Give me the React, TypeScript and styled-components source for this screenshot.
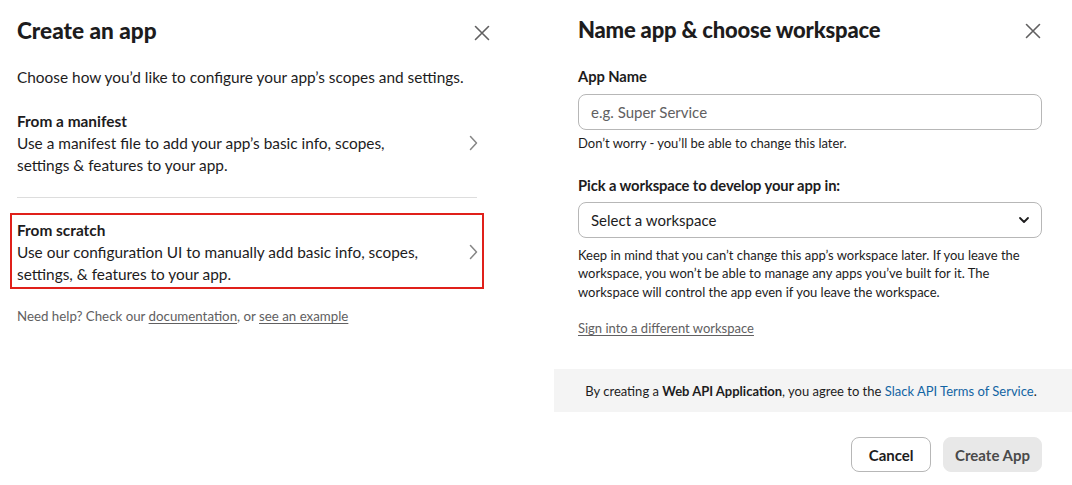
import React from "react";
import styled, { createGlobalStyle } from "styled-components";

const Global = createGlobalStyle`
  html, body { margin: 0; padding: 0; background: #ffffff; }
  body { font-family: Lato, "Noto Sans", sans-serif; color: #1d1c1d; -webkit-font-smoothing: antialiased; }
  * { box-sizing: border-box; }
`;

const Page = styled.div`
  display: flex;
  width: 1072px;
  height: 485px;
  overflow: hidden;
`;

const LeftPanel = styled.section`
  width: 554px;
  flex: none;
  padding: 15px 0 0 17px;
  display: flex;
  flex-direction: column;
`;

const RightPanel = styled.section`
  flex: 1;
  padding-top: 14px;
  display: flex;
  flex-direction: column;
`;

const Header = styled.div<{ $width: number; $xDrop?: number }>`
  width: ${(p) => p.$width}px;
  display: flex;
  align-items: center;
  justify-content: space-between;
  height: 32px;
  & > button { margin-top: ${(p) => p.$xDrop || 0}px; }
`;

const Title = styled.h1<{ $size: number; $spacing: number }>`
  margin: 0;
  font-size: ${(p) => p.$size}px;
  font-weight: 900;
  letter-spacing: ${(p) => p.$spacing}px;
  line-height: 32px;
  color: #1d1c1d;
`;

const CloseBtn = styled.button`
  border: 0;
  background: none;
  padding: 0;
  width: 18px;
  height: 18px;
  display: flex;
  align-items: center;
  justify-content: center;
  color: #616061;
  cursor: pointer;
`;

const Subtitle = styled.p`
  margin: 19px 0 0;
  font-size: 15.4px;
  line-height: 22px;
  color: #1d1c1d;
`;

const Spacer = styled.div<{ $h: number }>`
  height: ${(p) => p.$h}px;
  flex: none;
`;

const Option = styled.div<{ $highlight?: boolean }>`
  width: 474px;
  margin-left: -7px;
  padding: 4px 5px 2px 5px;
  border: 2px solid ${(p) => (p.$highlight ? "#e0201a" : "transparent")};
  display: flex;
  align-items: center;
`;

const OptionText = styled.div`
  flex: 1;
  font-size: 15.4px;
  line-height: 22px;
`;

const OptionTitle = styled.div`
  font-weight: 700;
  color: #1d1c1d;
`;

const OptionDesc = styled.div`
  color: #1d1c1d;
  width: 410px;
`;

const Chevron = styled.div`
  width: 9px;
  height: 20px;
  display: flex;
  align-items: center;
  justify-content: center;
  margin-right: -1px;
  color: #868686;
`;

const Divider = styled.hr`
  width: 460px;
  margin: 0;
  border: 0;
  border-top: 1px solid #dddddd;
`;

const Help = styled.p`
  margin: 18px 0 0;
  font-size: 13.3px;
  line-height: 18px;
  color: #616061;
`;

const HelpLink = styled.a`
  color: #616061;
  text-decoration: underline;
  text-underline-offset: 2px;
`;

const Form = styled.div`
  padding: 0 30px 0 24px;
  display: flex;
  flex-direction: column;
`;

const Label = styled.label<{ $top: number }>`
  margin-top: ${(p) => p.$top}px;
  font-size: 14.75px;
  font-weight: 700;
  letter-spacing: -0.1px;
  line-height: 22px;
  color: #1d1c1d;
`;

const TextInput = styled.input`
  margin-top: 7px;
  height: 36px;
  width: 100%;
  border: 1px solid #b7b7b7;
  border-radius: 8px;
  padding: 0 12px;
  font-family: Lato, "Noto Sans", sans-serif;
  font-size: 15px;
  color: #1d1c1d;
  outline: none;
  &::placeholder { color: #616061; }
`;

const Hint = styled.p<{ $top: number }>`
  margin: ${(p) => p.$top}px 0 0;
  font-size: 13px;
  line-height: 18.5px;
  color: #1d1c1d;
`;

const SelectBox = styled.div`
  margin-top: 6px;
  height: 36px;
  border: 1px solid #b7b7b7;
  border-radius: 8px;
  padding: 0 11px 0 12px;
  display: flex;
  align-items: center;
  justify-content: space-between;
  font-size: 15px;
  color: #1d1c1d;
`;

const SignLink = styled.a`
  margin-top: 18px;
  font-size: 13px;
  line-height: 18px;
  color: #616061;
  text-decoration: underline;
  text-underline-offset: 2px;
  align-self: flex-start;
`;

const Band = styled.div`
  margin-top: 32px;
  height: 43px;
  background: #f4f4f4;
  display: flex;
  align-items: center;
  justify-content: center;
  font-size: 13px;
  color: #1d1c1d;
  padding-right: 4px;
`;

const BandLink = styled.a`
  color: #1264a3;
  text-decoration: none;
`;

const Actions = styled.div`
  margin-top: 25px;
  padding-right: 30px;
  display: flex;
  justify-content: flex-end;
  gap: 12px;
`;

const Button = styled.button<{ $primary?: boolean }>`
  height: 35px;
  padding: 0 ${(p) => (p.$primary ? 11 : 16.5)}px;
  border-radius: 8px;
  font-family: Lato, "Noto Sans", sans-serif;
  font-size: 15px;
  font-weight: 700;
  border: ${(p) => (p.$primary ? "1px solid #e8e8e8" : "1px solid #b7b7b7")};
  background: ${(p) => (p.$primary ? "#e8e8e8" : "#ffffff")};
  color: ${(p) => (p.$primary ? "#4a4a4a" : "#1d1c1d")};
  cursor: pointer;
`;

const XIcon = () => (
  <svg width="16" height="16" viewBox="0 0 16 16" fill="none">
    <path d="M1.5 1.5 L14.5 14.5 M14.5 1.5 L1.5 14.5" stroke="currentColor" strokeWidth="1.6" strokeLinecap="round" />
  </svg>
);

const ChevronRight = () => (
  <svg width="9" height="16" viewBox="0 0 9 16" fill="none">
    <path d="M1.5 1.5 L7.5 8 L1.5 14.5" stroke="currentColor" strokeWidth="1.5" strokeLinecap="round" strokeLinejoin="round" />
  </svg>
);

const ChevronDown = () => (
  <svg width="12" height="8" viewBox="0 0 12 8" fill="none">
    <path d="M2 2 L6 6 L10 2" stroke="#1d1c1d" strokeWidth="1.8" strokeLinecap="round" strokeLinejoin="round" />
  </svg>
);

export default function App() {
  return (
    <>
      <Global />
      <Page>
        <LeftPanel>
          <Header $width={474} $xDrop={3}>
            <Title $size={22.6} $spacing={0}>Create an app</Title>
            <CloseBtn aria-label="Close"><XIcon /></CloseBtn>
          </Header>
          <Subtitle>Choose how you’d like to configure your app’s scopes and settings.</Subtitle>
          <Spacer $h={16} />
          <Option>
            <OptionText>
              <OptionTitle>From a manifest</OptionTitle>
              <OptionDesc>Use a manifest file to add your app’s basic info, scopes, settings &amp; features to your app.</OptionDesc>
            </OptionText>
            <Chevron><ChevronRight /></Chevron>
          </Option>
          <Spacer $h={17} />
          <Divider />
          <Spacer $h={15} />
          <Option $highlight>
            <OptionText>
              <OptionTitle>From scratch</OptionTitle>
              <OptionDesc>Use our configuration UI to manually add basic info, scopes, settings, &amp; features to your app.</OptionDesc>
            </OptionText>
            <Chevron><ChevronRight /></Chevron>
          </Option>
          <Help>
            Need help? Check our <HelpLink href="#">documentation</HelpLink>, or <HelpLink href="#">see an example</HelpLink>
          </Help>
        </LeftPanel>
        <RightPanel>
          <Form>
            <Header $width={464} $xDrop={1}>
              <Title $size={22} $spacing={-0.2}>Name app &amp; choose workspace</Title>
              <CloseBtn aria-label="Close"><XIcon /></CloseBtn>
            </Header>
            <Label $top={19}>App Name</Label>
            <TextInput placeholder="e.g. Super Service" />
            <Hint $top={4}>Don’t worry - you’ll be able to change this later.</Hint>
            <Label $top={21}>Pick a workspace to develop your app in:</Label>
            <SelectBox>
              <span>Select a workspace</span>
              <ChevronDown />
            </SelectBox>
            <Hint $top={8}>
              Keep in mind that you can’t change this app’s workspace later. If you leave the workspace, you won’t be able to manage any apps you’ve built for it. The workspace will control the app even if you leave the workspace.
            </Hint>
            <SignLink href="#">Sign into a different workspace</SignLink>
          </Form>
          <Band>
            <span>
              By creating a <b>Web API Application</b>, you agree to the <BandLink href="#">Slack API Terms of Service</BandLink>.
            </span>
          </Band>
          <Actions>
            <Button>Cancel</Button>
            <Button $primary>Create App</Button>
          </Actions>
        </RightPanel>
      </Page>
    </>
  );
}
